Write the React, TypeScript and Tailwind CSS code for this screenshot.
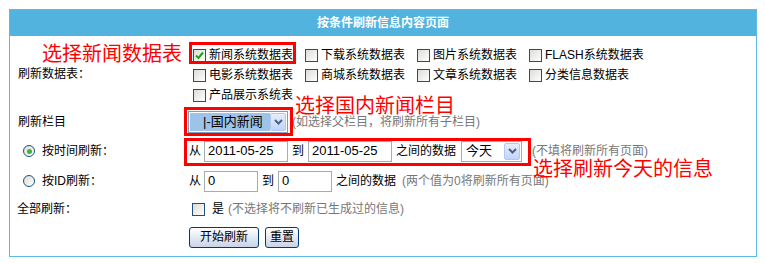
import type { ReactNode } from "react";

const FONT = "font-['Liberation_Sans','Noto_Sans_CJK_SC',sans-serif]";

function Box({ checked = false }: { checked?: boolean }) {
  return (
    <span className="mr-[3px] ml-[4px] inline-flex h-[13px] w-[13px] shrink-0 items-center justify-center border border-[#1c5180] bg-gradient-to-br from-[#dcdcd7] to-white">
      {checked && (
        <svg width="9" height="9" viewBox="0 0 9 9">
          <path d="M1 4.5 L3.5 7 L8 1.5" fill="none" stroke="#21a121" strokeWidth="2" />
        </svg>
      )}
    </span>
  );
}

function Radio({ on = false }: { on?: boolean }) {
  return (
    <span className="inline-flex h-[12px] w-[12px] shrink-0 items-center justify-center rounded-full border border-[#1c5180] bg-gradient-to-br from-[#dcdcd7] to-white">
      {on && <span className="h-[5px] w-[5px] rounded-full bg-[#3cb43c]" />}
    </span>
  );
}

function Arrow() {
  return (
    <span className="flex h-full w-[16px] items-center justify-center rounded-[2px] border border-[#b4c8ef] bg-gradient-to-b from-[#e6eefc] to-[#c1d3fb]">
      <svg width="9" height="6" viewBox="0 0 9 6">
        <path d="M1 1 L4.5 4.5 L8 1" fill="none" stroke="#4d6185" strokeWidth="2" />
      </svg>
    </span>
  );
}

function Field({ w, value }: { w: string; value: string }) {
  return (
    <span className={`flex h-[21px] items-center border border-[#a5acb2] bg-white pl-[3px] text-[13px] ${w}`}>
      {value}
    </span>
  );
}

function Row({ label, h, children }: { label: ReactNode; h: string; children: ReactNode }) {
  return (
    <div className={`flex items-center ${h}`}>
      <div className="flex w-[179px] shrink-0 items-center">{label}</div>
      <div className="flex items-center">{children}</div>
    </div>
  );
}

const tables = [
  ["新闻系统数据表", "下载系统数据表", "图片系统数据表", "FLASH系统数据表"],
  ["电影系统数据表", "商城系统数据表", "文章系统数据表", "分类信息数据表"],
  ["产品展示系统表"],
];

export default function App() {
  return (
    <div className={`h-[263px] w-[765px] bg-white pl-[9px] pt-[9px] text-[12px] text-black ${FONT}`}>
      <div className="relative h-[248px] w-[748px] border border-[#5bbbe4] bg-white">
        <div className="flex h-[26px] items-center justify-center bg-[#52b4de] text-[12px] font-bold text-white">
          按条件刷新信息内容页面
        </div>

        {/* 刷新数据表 */}
        <div className="flex h-[71px]">
          <div className="flex w-[179px] shrink-0 items-center pl-[8px] pt-[4px]">刷新数据表：</div>
          <div className="flex flex-col pt-[9px]">
            {tables.map((row, r) => (
              <div key={r} className="grid h-[20px] grid-cols-[112px_112px_112px_auto] items-center">
                {row.map((t, i) => (
                  <span key={t} className="flex items-center">
                    <Box checked={r === 0 && i === 0} />
                    {t}
                  </span>
                ))}
              </div>
            ))}
          </div>
        </div>

        <Row h="h-[29px]" label={<span className="pl-[8px]">刷新栏目</span>}>
          <span className="ml-[-1px] flex h-[22px] w-[100px] items-center border border-[#7f9db9] bg-white p-[1px]">
            <span className="flex h-full flex-1 items-center bg-[#9dc4e8] pl-[13px] text-[13px]">|-国内新闻</span>
            <Arrow />
          </span>
          <span className="ml-[4px] leading-[14px] text-[#777]">(如选择父栏目，将刷新所有子栏目)</span>
        </Row>

        <Row
          h="h-[30px]"
          label={
            <span className="flex items-center gap-[7px] pl-[13px]">
              <Radio on />
              按时间刷新：
            </span>
          }
        >
          <span className="mr-[3px]">从</span>
          <Field w="w-[84px]" value="2011-05-25" />
          <span className="mx-[4px]">到</span>
          <Field w="w-[84px]" value="2011-05-25" />
          <span className="ml-[4px] mr-[5px]">之间的数据</span>
          <span className="flex h-[21px] w-[61px] items-center border border-[#a5acb2] bg-white p-[1px]">
            <span className="flex-1 pl-[3px] text-[13px]">今天</span>
            <Arrow />
          </span>
          <span className="ml-[10px] leading-[14px] text-[#777]">(不填将刷新所有页面)</span>
        </Row>

        <Row
          h="h-[30px]"
          label={
            <span className="flex items-center gap-[7px] pl-[13px]">
              <Radio />
              按ID刷新：
            </span>
          }
        >
          <span className="mr-[3px]">从</span>
          <Field w="w-[54px]" value="0" />
          <span className="mx-[4px]">到</span>
          <Field w="w-[54px]" value="0" />
          <span className="ml-[4px]">之间的数据</span>
          <span className="ml-[6px] text-[#777]">(两个值为0将刷新所有页面)</span>
        </Row>

        <Row h="h-[26px]" label={<span className="pl-[7px]">全部刷新：</span>}>
          <span className="ml-[-1px] flex items-center">
            <Box />
          </span>
          <span className="ml-[4px]">是</span>
          <span className="ml-[4px] text-[#777]">(不选择将不刷新已生成过的信息)</span>
        </Row>

        <Row h="h-[30px]" label={null}>
          <button className="h-[21px] w-[70px] rounded-[3px] border border-[#003c74] bg-gradient-to-b from-white to-[#c9d3e6] text-[12px]">
            开始刷新
          </button>
          <button className="ml-[6px] h-[21px] w-[34px] rounded-[3px] border border-[#003c74] bg-gradient-to-b from-white to-[#c9d3e6] text-[12px]">
            重置
          </button>
        </Row>

        {/* annotations */}
        <span className="absolute left-[32px] top-[37px] text-[20px] leading-[14px] text-[#ff0000]">选择新闻数据表</span>
        <span className="absolute left-[285px] top-[89px] text-[20px] leading-[14px] text-[#ff0000]">选择国内新闻栏目</span>
        <span className="absolute left-[523px] top-[152px] text-[20px] leading-[14px] text-[#ff0000]">选择刷新今天的信息</span>
        <span className="absolute left-[179px] top-[32px] h-[22px] w-[107px] border-[3px] border-[#ff0000]" />
        <span className="absolute left-[174px] top-[97px] h-[29px] w-[109px] border-[3px] border-[#ff0000]" />
        <span className="absolute left-[174px] top-[128px] h-[28px] w-[347px] border-[3px] border-[#ff0000]" />
      </div>
    </div>
  );
}
